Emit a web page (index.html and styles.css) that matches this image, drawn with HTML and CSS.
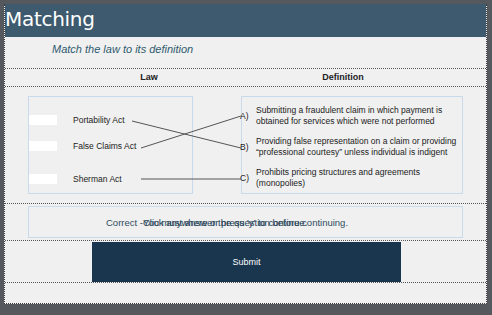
FILE: index.html
```html
<!DOCTYPE html>
<html lang="en">
<head>
  <meta charset="UTF-8" />
  <title>Matching</title>
  <link rel="stylesheet" href="styles.css">
</head>
<body>

<div class="frame">
  <div class="header">Matching</div>
  <div class="subtitle">Match the law to its definition</div>

  <div class="cols">
    <div class="col-law">Law</div>
    <div class="col-def">Definition</div>
  </div>

  <div class="match">
    <div class="laws">
      <div class="law"><span class="slot"></span><span class="name">Portability Act</span></div>
      <div class="law"><span class="slot"></span><span class="name">False Claims Act</span></div>
      <div class="law"><span class="slot"></span><span class="name">Sherman Act</span></div>
    </div>
    <div class="defs">
      <div class="def"><span class="key">A)</span><span>Submitting a fraudulent claim in which payment is obtained for services which were not performed</span></div>
      <div class="def"><span class="key">B)</span><span>Providing false representation on a claim or providing “professional courtesy” unless individual is indigent</span></div>
      <div class="def"><span class="key">C)</span><span>Prohibits pricing structures and agreements (monopolies)</span></div>
    </div>
    <svg class="lines" width="484" height="117" viewBox="0 0 484 117">
      <line x1="127" y1="34" x2="236" y2="61" />
      <line x1="136" y1="61" x2="236" y2="29" />
      <line x1="136" y1="92" x2="236" y2="92" />
    </svg>
  </div>

  <div class="feedback">
    <div class="feedback-box">
      <span>Correct - </span>
      <span class="stack">
        <span>You must answer the question before continuing.</span>
        <span class="over">Click anywhere or press 'y' to continue.</span>
      </span>
    </div>
  </div>

  <div class="actions">
    <button class="submit">Submit</button>
  </div>
  <div class="foot"></div>
</div>

</body>
</html>
```

FILE: styles.css
```css
body { margin: 0; background: #55585c; font-family: "Liberation Sans", Arial, sans-serif; }
.frame { margin: 4px 0 0 4px; width: 483px; height: 300px; background: #f0f0f0; border: 1px dotted #3a3a3a; border-top: none; box-sizing: border-box; }
.header { height: 33px; background: #3e5a6e; color: #fff; font-family: "DejaVu Sans", sans-serif; font-size: 20px; line-height: 31px; padding-left: 0; letter-spacing: -0.3px; }
.subtitle { height: 32px; box-sizing: border-box; padding: 6px 0 0 47px; color: #2f5a6e; font-size: 11px; font-style: italic; border-bottom: 1px dotted #555; }
.cols { display: flex; height: 18px; box-sizing: border-box; border-bottom: 1px dotted #555; font-size: 9px; font-weight: bold; color: #222; line-height: 17px; }
.col-law { width: 288px; text-align: center; }
.col-def { width: 100px; text-align: center; }
.match { position: relative; height: 117px; box-sizing: border-box; padding: 9px 0 0 23px; display: flex; gap: 48px; border-bottom: 1px dotted #555; }
.laws { width: 165px; height: 98px; box-sizing: border-box; border: 1px solid #c9dbea; padding-top: 18px; display: flex; flex-direction: column; gap: 16px; }
.law { display: flex; align-items: center; height: 10px; }
.law:last-child { margin-top: 7px; }
.slot { width: 28px; height: 10px; background: #fff; margin-right: 16px; }
.name { font-size: 8.5px; color: #222; }
.defs { width: 222px; height: 98px; box-sizing: border-box; border: 1px solid #c9dbea; padding: 8px 4px 0 0; display: flex; flex-direction: column; gap: 9px; }
.def { display: flex; align-items: center; font-size: 8.5px; line-height: 11px; color: #222; }
.key { width: 16px; flex: none; margin-left: -2px; }
.lines { position: absolute; left: 0; top: 0; pointer-events: none; }
.lines line { stroke: #555; stroke-width: 1; }
.feedback { height: 37px; box-sizing: border-box; padding: 2px 0 0 23px; border-bottom: 1px dotted #555; }
.feedback-box { width: 435px; height: 32px; box-sizing: border-box; border: 1px solid #c9dbea; display: flex; align-items: center; padding-left: 77px; font-size: 9.5px; color: #2f4a5e; }
.stack { position: relative; }
.over { position: absolute; left: 0; top: 0; white-space: nowrap; color: #244055; }
.actions { height: 42px; box-sizing: border-box; padding: 0 0 0 87px; border-bottom: 1px dotted #555; display: flex; align-items: center; }
.submit { width: 309px; height: 40px; border: none; background: #1a364e; color: #fff; font-family: "Liberation Sans", Arial, sans-serif; font-size: 9px; }
```
